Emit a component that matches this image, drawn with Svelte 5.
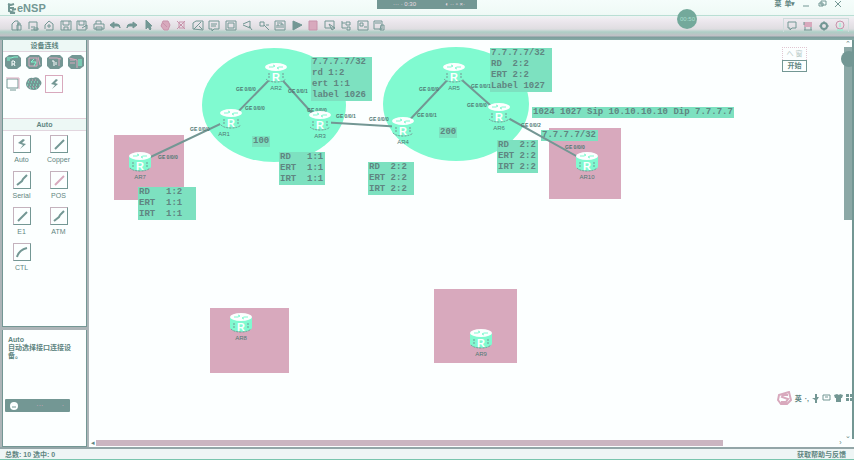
<script>
  const tools = ['new', 'open', 'add', 'save', 'saveAs', 'print', 'undo', 'redo', 'pointer', 'hand', 'delete', 'erase', 'text', 'frame', 'zoomIn', 'zoomOut', 'fit', 'play', 'stop', 'capture', 'tree', 'grid', 'console'];
  const art = {
    new: 'M2 11V5l3-3h3v9zM7 11V6h4v5zM8 6V4h2v2',
    open: 'M2 10V3h8v8H4M4 8h4M7 9h4v2H7z',
    add: 'M2 10V6l4-4 4 3v6H3M6 5v4M4 7h4',
    save: 'M1 2h10v9H1zM3 2v4h6V2M4 11V8h4v3',
    saveAs: 'M1 2h9v9H1zM3 2v4h5V2M6 9l5-3v4',
    print: 'M3 5V2h5v3M1 5h10v5H1zM3 8h6v3H3z',
    undo: 'M5 3 1 6l4 3V7h4q2 0 2 2 0-4-3-4H5z',
    redo: 'M7 3l4 3-4 3V7H3Q1 7 1 9q0-4 3-4h3z',
    pointer: 'M4 1v9l2-2 2 3 1-1-1-3h2z',
    hand: 'M2 7l2-5 5 0 2 4-2 5H5zM4 4l4 4',
    delete: 'M2 2l8 8M10 2 2 10M4 3h5v6H4z',
    erase: 'M1 10V4l3-2h7v9zM2 10l7-7M7 7l3 3',
    text: 'M1 2h10v8H6l-2 2v-2H1zM3 5h6M3 7h5',
    frame: 'M1 2h10v9H1zM3 4h6v5H3z',
    zoomIn: 'M2 5l7-3v7L2 6M8 7l3 4',
    zoomOut: 'M2 3h4v4H2zM6 6l5 5M8 6h3',
    fit: 'M1 2h10v9H1zM3 9V6h2v3M7 9V5h2v4M3 4h5',
    play: 'M2 2l9 4-9 5z',
    stop: 'M2 2h8v9H2z',
    capture: 'M1 2h9v7H1zM5 5l6 4-3 2z',
    tree: 'M2 2v7h4M2 4h3M6 3h4v3H6zM7 8h3v3H7z',
    grid: 'M1 2h10v9H1zM3 4h3v3H3zM7 8h3',
    console: 'M1 2h8v8H1zM2 4h6M8 6h3v5H7z'
  };
  const solid = ['undo', 'redo', 'pointer', 'play', 'stop', 'hand'];
  const pinkIcons = ['stop', 'hand', 'delete'];
  const cables = [
    { name: 'Auto', bolt: true },
    { name: 'Copper', d: 'M4 13 13 4' },
    { name: 'Serial', d: 'M3 13l5-4 1-2 4-4' },
    { name: 'POS', d: 'M4 13 13 4', pink: true },
    { name: 'E1', d: 'M4 13 13 4' },
    { name: 'ATM', d: 'M3 13l5-4 1-2 4-4' },
    { name: 'CTL', d: 'M3 13Q5 6 13 4' }
  ];
  const zones = [
    [114, 135, 70, 65], [549, 128, 72, 71], [210, 308, 79, 65], [434, 289, 83, 74]
  ];
  const routers = [
    ['AR7', 140, 162], ['AR1', 231, 119, -7], ['AR2', 276, 73], ['AR3', 320, 121], ['AR4', 403, 127],
    ['AR5', 454, 73], ['AR6', 499, 113], ['AR10', 587, 162], ['AR8', 241, 323], ['AR9', 481, 339]
  ];
  const ports = [
    [158, 159, 0], [190, 131, 0], [245, 110, 0], [236, 91, 0], [288, 93, 1], [307, 112, 0], [336, 118, 1],
    [369, 121, 0], [417, 117, 1], [419, 91, 0], [471, 88, 1], [467, 107, 0], [521, 127, 2], [565, 149, 0]
  ];
  const notes = [
    { x: 311, y: 57, w: 61, t: '7.7.7.7/32\nrd 1:2\nert 1:1\nlabel 1026' },
    { x: 490, y: 48, w: 62, t: '7.7.7.7/32\nRD  2:2\nERT 2:2\nLabel 1027' },
    { x: 138, y: 187, w: 58, t: 'RD   1:2\nERT  1:1\nIRT  1:1' },
    { x: 279, y: 152, w: 46, t: 'RD   1:1\nERT  1:1\nIRT  1:1' },
    { x: 368, y: 162, w: 46, t: 'RD  2:2\nERT 2:2\nIRT 2:2' },
    { x: 497, y: 140, w: 41, t: 'RD  2:2\nERT 2:2\nIRT 2:2' },
    { x: 532, y: 107, w: 202, t: '1024 1027 Sip 10.10.10.10 Dip 7.7.7.7' },
    { x: 541, y: 130, w: 57, t: '7.7.7.7/32' },
    { x: 252, y: 136, w: 18, t: '100' },
    { x: 439, y: 127, w: 18, t: '200' }
  ];
</script>

{#snippet device(kind)}
  <svg width="18" height="16" viewBox="0 0 18 16">
    {#if kind === 'cloud'}
      <path class="fill" d="M2 5q2-4 6-3 5-2 7 2 3 3 0 6-2 4-6 4-5 0-7-3-2-3 0-6z" />
      <path class="mintline" d="M3 6h11M2 9h13M5 12h8" stroke-dasharray="1 2" />
      <path class="pinkline" d="M4 4h9M4 11h9" stroke-dasharray="1 2" />
    {:else if kind === 'pc'}
      <path class="line" d="M3 12V3h11v9zM6 14h6" />
      <path class="pinkline" d="M2 2h13v11" />
    {:else}
      <path class="fill" d="M1 4l4-3h9l3 3v8l-4 3H4l-3-3z" />
      {#if kind === 'router'}
        <path class="mintline" d="M3 4h4l3-1h4M3 6h3" />
        <path class="whiteline" d="M8 12V7h2l1 1-1 2H8M10 10l1 2" />
      {:else if kind === 'switch'}
        <path class="pinkline" d="M4 4h8v8H4zM13 3l2 8" />
        <path class="mintline" d="M9 5 6 8h5l-2 4" />
      {:else if kind === 'wlan'}
        <path class="pinkline" d="M3 4h8l4 1M13 5v7" />
        <path class="whiteline" d="M6 7h2v5M10 8v3" />
      {:else}
        <path class="pinkline" d="M2 4l8 2v8M3 6h5M3 9h5" />
        <path class="mintline" d="M12 5v7M14 5v7" />
      {/if}
    {/if}
  </svg>
{/snippet}

<div class="app">
  <header>
    <div class="titlebar">
      <h1>
        <svg width="10" height="11" viewBox="0 0 10 11"><path class="line" d="M1 1l3 1 3-1M2 5h5M2 2v6l6 2M5 7l4-1M3 10h5" stroke-width="2" /></svg>
        eNSP
      </h1>
      <div class="capturebar"><span>··· · 0:30</span><span>◖ ·· ▫ ×·</span></div>
      <nav class="win">
        <button>菜</button><button class="menu">单▾</button>
        <button aria-label="Minimize"><svg width="10" height="8"><path class="line" d="M2 6h6" /></svg></button>
        <button aria-label="Restore"><svg width="10" height="8"><path class="line" d="M4 1h5v4H4zM2 3h4v3H2z" /></svg></button>
        <button aria-label="Close"><svg width="10" height="8"><path class="line" d="M2 1l6 6M8 1 2 7" /></svg></button>
      </nav>
    </div>
    <div class="toolbar">
      <div class="tools">
        {#each tools as tool}
          <button aria-label={tool} class:pink={pinkIcons.includes(tool)} class:solid={solid.includes(tool)}>
            <svg width="12" height="12" viewBox="0 0 12 12"><path class="line" d={art[tool]} /></svg>
          </button>
        {/each}
      </div>
      <div class="tools right">
        <button aria-label="Forum"><svg width="12" height="12"><path class="line" d="M2 2h8v6H6l-2 2V8H2z" /></svg></button>
        <button aria-label="Home"><svg width="12" height="12"><path class="pinkfill" d="M2 2h8v5H2z" /><path class="line" d="M2 10h8M3 7v3M9 7v3M2 2v3" /></svg></button>
        <button aria-label="Settings"><svg width="12" height="12"><circle class="line" cx="6" cy="6" r="3" stroke-width="2" /><path class="line" d="M6 1v2M6 9v2M1 6h2M9 6h2" /></svg></button>
        <button aria-label="Help" class="pink"><svg width="12" height="12"><circle class="line" cx="6" cy="5" r="4" /><path class="greenline" d="M3 10h6M6 3v4" /></svg></button>
      </div>
    </div>
    <div class="badge">00:50</div>
  </header>

  <main>
    <aside>
      <section class="palette">
        <h2>设备连线</h2>
        <div class="devices">
          {#each ['router', 'switch', 'wlan', 'firewall', 'pc', 'cloud'] as kind}
            <button aria-label={kind}>{@render device(kind)}</button>
          {/each}
          <button class="chosen" aria-label="cables"><svg width="16" height="16"><path class="fill" d="M10 3 5 8l4 1-3 4 6-5-3-1 3-3z" /></svg></button>
        </div>
        <h2>Auto</h2>
        <div class="cables">
          {#each cables as c}
            <button class="cable">
              <svg width="18" height="18">
                {#if c.bolt}<path class="fill" d="M9 3 4 7l5 2-3 4 6-5-4-1 3-3z" />
                {:else}<path class="line thick" class:rose={c.pink} d={c.d} />{/if}
              </svg>
              <span>{c.name}</span>
            </button>
          {/each}
        </div>
      </section>
      <section class="about">
        <h3>Auto</h3>
        <p>自动选择接口连接设备。</p>
        <div class="toast"><svg width="8" height="8"><circle class="white" cx="4" cy="4" r="4" /><path class="line" d="M2 5h4" /></svg><span>···</span><span>·</span></div>
      </section>
    </aside>

    <div class="canvas">
      <svg class="topology">
        <g transform="translate(-89 -40)">
          <ellipse class="mint" cx="274" cy="105" rx="72" ry="57" />
          <ellipse class="mint" cx="456" cy="104" rx="73" ry="57" />
          {#each zones as [x, y, w, h]}<rect class="pinkfill" {x} {y} width={w} height={h} />{/each}
        </g>
      </svg>
      {#each notes as n}
        <pre class="note" style="left:{n.x - 89}px;top:{n.y - 40}px;width:{n.w}px">{n.t}</pre>
      {/each}
      <svg class="topology">
        <g transform="translate(-89 -40)">
          <path class="link" d="M140 162 231 119 276 73 320 122 403 127 454 73 499 113 587 162" />
          {#each ports as [x, y, n]}<text class="port" {x} {y}>GE 0/0/{n}</text>{/each}
          {#each routers as [name, x, y, dx = 0]}
            <g transform="translate({x} {y})">
              <path class="mint" d="M-11-6V5Q-9 9 0 9T11 5V-6z" />
              <ellipse class="white" cx="0" cy="-6" rx="11" ry="4" />
              <path class="shade" d="M-7 0v6M7 0v6M-10 6q3 3 10 3t10-3" stroke-dasharray="2 1" />
              <path class="mintline" d="M-7-6h4l2-1M7-6H3L1-5M-3-8l2 1M3-4 1-5" />
              <text class="mark" x="0" y="8">R</text>
              <text class="name" x={dx} y="17">{name}</text>
            </g>
          {/each}
        </g>
      </svg>
      <div class="float"><span>へ 窗</span><button>开始</button></div>
      <div class="ime">
        <svg width="15" height="14"><path class="pinkline" stroke-width="2" d="M2 4l10-3 2 8-4 4H4L1 9zM11 4H6L5 6l6 2-2 3H4" /></svg>
        <span>英</span><span>·,</span>
        <svg width="7" height="9"><path class="fill" d="M3 0h2v3h2L5 6v3H3V6L0 4h3z" /></svg>
        <svg width="9" height="8"><path class="line" d="M1 1h7v5H1zM3 3h3" /></svg>
        <svg width="9" height="8"><path class="fill" d="M0 1l3-1 2 1 1-1 3 1-1 3H7v4H2V4H1z" /></svg>
        <svg width="8" height="8"><path class="fill" d="M0 0h3v3H0zM4 0h3v3H4zM0 4h3v3H0zM4 4h3v3H4z" /></svg>
      </div>
      <div class="vscroll"><i>⌃</i><b></b><i>⌄</i></div>
      <div class="knob"></div>
      <div class="hscroll"><i>◂</i><b></b><i>›</i></div>
    </div>
  </main>
  <footer><span>总数: 10 选中: 0</span><a href="#help">获取帮助与反馈</a></footer>
</div>

<style>
  :global(body) { margin: 0; }
  .app {
    --teal: #739794; --ink: #5f8581; --mint: #80fad0; --pink: #d8a9bd; --paper: #fcffff;
    display: flex; flex-direction: column; height: 100vh; min-height: 400px; overflow: hidden;
    background: var(--paper); color: var(--ink);
    font-family: "Liberation Sans", "Noto Sans CJK SC", sans-serif; font-size: 7px;
  }
  * { box-sizing: border-box; }
  button { border: 0; padding: 0; background: none; color: inherit; font: inherit; }
  svg { display: block; flex: none; }
  h1, h2, h3, p, pre { margin: 0; }
  header { position: relative; flex: none; height: 40px; background: linear-gradient(#f5fdfb 0, #effaf6 14px, #eee9ef 20px, #dfdde1 29px, #adcec5 32px, #c2bfc6 36px, #7b9c9b 37px, #86aba6 40px); }
  .titlebar { display: flex; align-items: flex-start; justify-content: space-between; height: 16px; border-bottom: 1px solid #b9dfd4; }
  h1 { display: flex; gap: 0; align-items: center; padding: 2px 0 0 7px; font-size: 11px; line-height: 12px; color: var(--teal); }
  .capturebar { position: absolute; left: 50%; top: 0; width: 100px; height: 9px; margin-left: -50px; display: flex; justify-content: space-between; padding: 0 12px 0 16px; background: var(--teal); color: #e9dbe1; font-size: 6px; line-height: 8px; }
  .win { display: flex; padding: 0 8px 0 0; line-height: 8px; font-weight: bold; }
  .win button { width: 16px; height: 8px; display: grid; place-items: center; }
  .win button:nth-child(1) { width: 8px; }
  .toolbar { display: flex; justify-content: space-between; padding: 2px 5px 0 8px; }
  .tools { display: flex; }
  .tools button { width: 16px; height: 13px; margin-right: 1px; display: grid; place-items: center; }
  .tools button:nth-child(2n) { margin-right: 0; }
  .right { border: 1px solid #cfdcdc; border-bottom: 0; }
  .tools.right button { margin: 0; }
  .tools .pink .line { stroke: #c893ab; }
  .solid .line { fill: var(--teal); }
  .solid.pink .line { fill: var(--pink); }
  .line { fill: none; stroke: var(--teal); }
  .fill { fill: var(--teal); }
  .pinkfill { fill: var(--pink); }
  .mint { fill: var(--mint); }
  .white { fill: var(--paper); }
  .mintline, .greenline { fill: none; stroke: var(--mint); }
  .pinkline { fill: none; stroke: var(--pink); }
  .whiteline { fill: none; stroke: var(--paper); }
  .thick { stroke-width: 2; }
  .rose { stroke: var(--pink); }
  .badge { position: absolute; left: 80.5%; top: 9px; width: 20px; height: 20px; margin-left: -10px; border-radius: 50%; background: #73a99b; color: #a9dfcd; text-align: center; line-height: 20px; font-size: 6px; }
  main { flex: 1; display: flex; min-height: 0; }
  aside { width: 89px; flex: none; display: flex; flex-direction: column; gap: 3px; padding: 0 2px; background: #adb5b8; }
  aside section { background: var(--paper); border: 1px solid var(--teal); border-top: 0; }
  .palette { flex: 1; min-height: 0; overflow: hidden; }
  .about { flex: none; height: 117px; padding: 5px; }
  h2 { height: 12px; line-height: 11px; text-align: center; font-size: 7px; background: #edf8f5; border-bottom: 1px solid #e2d6df; }
  .devices { display: grid; grid-template-columns: repeat(4, 21px); grid-auto-rows: 22px; height: 67px; border-bottom: 1px solid #e2cfd9; }
  .devices button { display: grid; place-items: center; width: 20px; height: 20px; }
  .devices .chosen { width: 18px; height: 18px; margin-top: 1px; border: 1px solid var(--pink); }
  .cables { display: grid; grid-template-columns: 37px 37px; grid-auto-rows: 36px; padding-top: 4px; }
  .cable { display: flex; flex-direction: column; align-items: center; gap: 2px; line-height: 9px; }
  .cable svg { border: 1px solid #c4b2bd; border-right-color: var(--teal); border-bottom-color: var(--teal); }
  h3 { font-size: 7px; line-height: 9px; }
  p { line-height: 8px; font-size: 7px; font-weight: bold; }
  .toast { width: 65px; height: 13px; margin: 39px 0 0 -3px; padding: 0 6px 0 5px; display: flex; align-items: center; justify-content: space-between; border-radius: 1px; background: var(--teal); color: var(--pink); }
  .canvas { position: relative; flex: 1; min-width: 0; overflow: hidden; background: var(--paper); }
  .topology { position: absolute; inset: 0; width: 100%; height: 100%; }
  .note { position: absolute; padding: 0 1px; background: #7de1c0; color: #5f8581; font: bold 9px/11px "Liberation Mono", monospace; }
  .link { fill: none; stroke: var(--teal); stroke-width: 2; }
  .shade { fill: none; stroke: var(--teal); }
  .port { font-size: 5px; font-weight: bold; fill: #4f7873; }
  .name { font-size: 6px; text-anchor: middle; fill: #4f7873; }
  .mark { font-size: 11px; font-weight: bold; text-anchor: middle; fill: var(--paper); }
  .float { position: absolute; right: 47px; top: 7px; width: 25px; text-align: center; color: #b6c9c7; line-height: 12px; }
  .float span { display: block; border: 1px dotted #e0c6d1; border-bottom: 0; }
  .float button { width: 25px; height: 12px; border: 1px solid var(--teal); color: var(--ink); font-weight: bold; line-height: 10px; display: block; }
  .ime { position: absolute; right: 0; bottom: 42px; display: flex; align-items: center; gap: 3px; font-weight: bold; }
  .vscroll { position: absolute; right: 0; top: 0; bottom: 8px; width: 10px; display: flex; flex-direction: column; align-items: center; line-height: 7px; border-right: 2px solid var(--teal); }
  .vscroll b { width: 8px; height: 173px; background: #8ba8a6; }
  i { font-style: normal; }
  .vscroll i:last-child { margin-top: auto; }
  .knob { position: absolute; right: -3px; top: 11px; width: 16px; height: 16px; border-radius: 50%; background: var(--teal); }
  .hscroll { position: absolute; left: 0; right: 10px; bottom: 1px; height: 7px; display: flex; align-items: center; line-height: 7px; }
  .hscroll i { width: 7px; text-align: center; }
  .hscroll b { width: 83%; height: 6px; background: #cbb5c1; }
  .hscroll i:last-child { margin-left: auto; }
  footer { flex: none; height: 13px; display: flex; justify-content: space-between; align-items: center; padding: 1px 8px 1px 5px; border-top: 2px solid #93a6a8; border-bottom: 1px solid #79c5ae; background: #eef5f5; font-size: 7px; font-weight: bold; }
  a { color: inherit; text-decoration: none; }
</style>
